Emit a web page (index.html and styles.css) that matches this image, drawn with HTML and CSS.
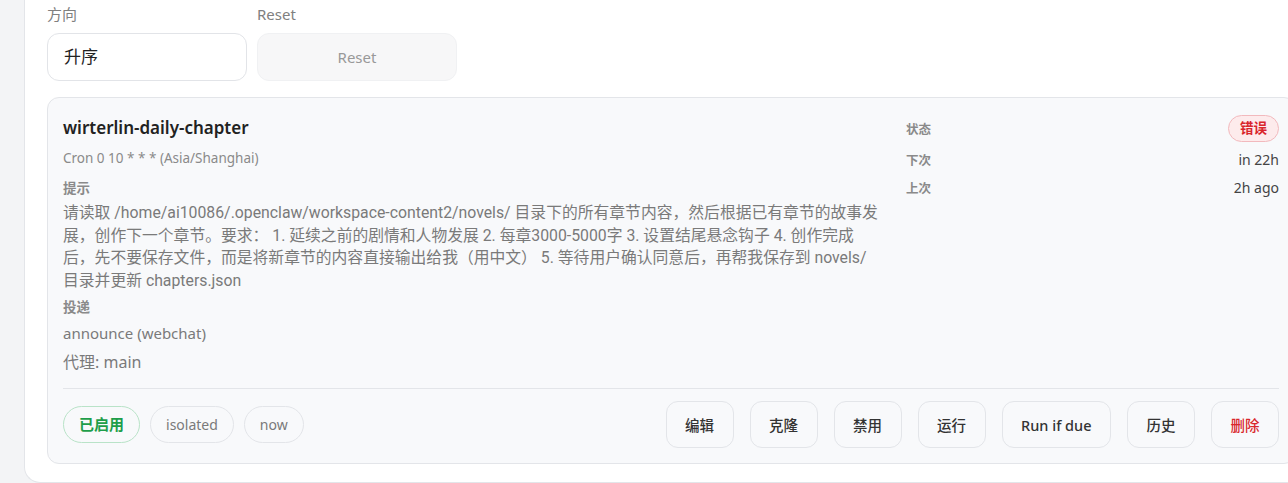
FILE: index.html
```html
<!DOCTYPE html>
<html lang="zh-CN">
<head>
    <meta charset="UTF-8">
    <meta name="viewport" content="width=device-width, initial-scale=1.0">
    <title>Cron 任务</title>
    <link rel="stylesheet" href="styles.css">
</head>
<body>
    <div class="panel">

        <div class="filters">
            <div class="field">
                <label class="field-label">方向</label>
                <div class="select-box">升序</div>
            </div>
            <div class="field">
                <label class="field-label">Reset</label>
                <button class="reset-btn">Reset</button>
            </div>
        </div>

        <div class="job-card">
            <div class="job-main">
                <div class="job-info">
                    <div class="job-title">wirterlin-daily-chapter</div>
                    <div class="job-schedule">Cron 0 10 * * * (Asia/Shanghai)</div>

                    <div class="small-label">提示</div>
                    <div class="job-prompt">请读取 /home/ai10086/.openclaw/workspace-content2/novels/ 目录下的所有章节内容，然后根据已有章节的故事发展，创作下一个章节。要求： 1. 延续之前的剧情和人物发展 2. 每章3000-5000字 3. 设置结尾悬念钩子 4. 创作完成后，先不要保存文件，而是将新章节的内容直接输出给我（用中文） 5. 等待用户确认同意后，再帮我保存到 novels/ 目录并更新 chapters.json</div>

                    <div class="small-label delivery-label">投递</div>
                    <div class="job-delivery">announce (webchat)</div>
                    <div class="job-agent">代理: main</div>
                </div>

                <div class="job-status">
                    <div class="status-row first">
                        <span class="status-label">状态</span>
                        <span class="badge-error">错误</span>
                    </div>
                    <div class="status-row">
                        <span class="status-label">下次</span>
                        <span class="status-value">in 22h</span>
                    </div>
                    <div class="status-row">
                        <span class="status-label">上次</span>
                        <span class="status-value">2h ago</span>
                    </div>
                </div>
            </div>

            <div class="job-footer">
                <div class="chips">
                    <span class="chip chip-on">已启用</span>
                    <span class="chip">isolated</span>
                    <span class="chip">now</span>
                </div>
                <div class="actions">
                    <button class="act">编辑</button>
                    <button class="act">克隆</button>
                    <button class="act">禁用</button>
                    <button class="act">运行</button>
                    <button class="act">Run if due</button>
                    <button class="act">历史</button>
                    <button class="act act-danger">删除</button>
                </div>
            </div>
        </div>

    </div>
</body>
</html>
```

FILE: styles.css
```css
body {
    margin: 0;
    background-color: #f3f4f6;
    font-family: "Noto Sans", "Noto Sans CJK SC", sans-serif;
    overflow: hidden;
}
.panel {
    margin-left: 24px;
    width: 1300px;
    background-color: #fff;
    border-left: 1px solid #e3e5e9;
    border-bottom: 1px solid #e3e5e9;
    border-bottom-left-radius: 16px;
    padding: 4px 0 18px 22px;
}
.filters {
    display: flex;
    gap: 10px;
}
.field {
    width: 200px;
}
.field-label {
    display: block;
    font-size: 15px;
    line-height: 20px;
    color: #808080;
    margin-bottom: 9px;
}
.select-box {
    height: 46px;
    border: 1px solid #e2e4e8;
    border-radius: 12px;
    padding: 0 16px;
    font-size: 17px;
    line-height: 46px;
    color: #222;
    background: #fff;
}
.reset-btn {
    width: 200px;
    height: 48px;
    border: 1px solid #f0f1f3;
    border-radius: 12px;
    background-color: #f7f7f8;
    font-family: inherit;
    font-size: 15px;
    color: #999;
}
.job-card {
    margin-top: 16px;
    width: 1249px;
    box-sizing: border-box;
    border: 1px solid #e3e5e9;
    border-radius: 12px;
    background-color: #f8f9fb;
    padding: 16px 16px 15px 15px;
}
.job-main {
    display: grid;
    grid-template-columns: 820px 1fr;
    gap: 23px;
}
.job-title {
    font-size: 17px;
    font-weight: 600;
    line-height: 28px;
    color: #222;
}
.job-schedule {
    margin-top: 7px;
    font-size: 13.5px;
    line-height: 18px;
    color: #8a8a8a;
}
.small-label {
    margin-top: 13px;
    font-size: 13.5px;
    font-weight: 700;
    line-height: 16px;
    color: #8a8a8a;
}
.job-prompt {
    margin-top: 6px;
    font-family: Roboto, "Noto Sans CJK SC", sans-serif;
    font-size: 15.8px;
    line-height: 22.5px;
    color: #7a7a7a;
}
.delivery-label {
    margin-top: 7px;
}
.job-delivery {
    margin-top: 8px;
    font-size: 15px;
    line-height: 20px;
    color: #7a7a7a;
}
.job-agent {
    margin-top: 8px;
    font-size: 16px;
    line-height: 22px;
    color: #7a7a7a;
}
.job-status {
    display: flex;
    flex-direction: column;
    gap: 6px;
}
.status-row {
    display: flex;
    justify-content: space-between;
    align-items: center;
    height: 22px;
}
.status-row.first {
    height: 28px;
}
.status-label {
    font-size: 12.5px;
    font-weight: 700;
    color: #8a8a8a;
}
.status-value {
    font-size: 14px;
    color: #444;
}
.badge-error {
    height: 25px;
    line-height: 25px;
    padding: 0 11px;
    border: 1px solid #f2b9bd;
    border-radius: 999px;
    background-color: #fdebec;
    color: #d9262c;
    font-size: 13.5px;
    font-weight: 700;
}
.job-footer {
    margin-top: 15px;
    border-top: 1px solid #e3e5e9;
    padding-top: 12px;
    display: flex;
    justify-content: space-between;
    align-items: center;
}
.chips {
    display: flex;
    gap: 10px;
}
.chip {
    height: 35px;
    line-height: 35px;
    padding: 0 15px;
    border: 1px solid #e3e5e9;
    border-radius: 999px;
    font-size: 14px;
    color: #7a7a7a;
    background-color: #f8f9fb;
}
.chip-on {
    border-color: #b9e3c8;
    color: #1e9e4a;
    font-weight: 700;
    font-size: 15px;
}
.actions {
    display: flex;
    gap: 16px;
}
.act {
    height: 47px;
    padding: 0 18.5px;
    border: 1px solid #e3e5e9;
    border-radius: 12px;
    background-color: #f8f9fb;
    font-family: inherit;
    font-size: 14.5px;
    font-weight: 500;
    color: #333;
}
.act-danger {
    color: #d9262c;
}
```
